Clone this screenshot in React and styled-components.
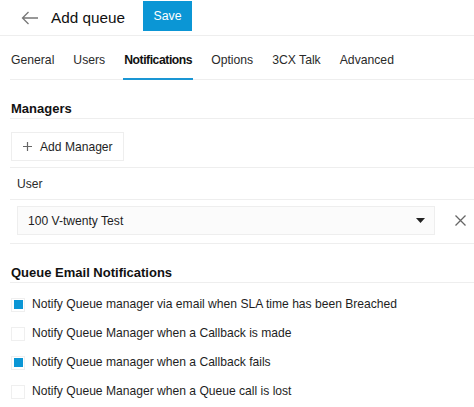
import React from 'react';
import styled, { createGlobalStyle } from 'styled-components';

const GlobalStyle = createGlobalStyle`
  body {
    margin: 0;
    background: #ffffff;
    font-family: "Liberation Sans", Arial, sans-serif;
    color: #222222;
  }
`;

const tabs = ['General', 'Users', 'Notifications', 'Options', '3CX Talk', 'Advanced'];

const notifications = [
  { label: 'Notify Queue manager via email when SLA time has been Breached', checked: true },
  { label: 'Notify Queue Manager when a Callback is made', checked: false },
  { label: 'Notify Queue manager when a Callback fails', checked: true },
  { label: 'Notify Queue Manager when a Queue call is lost', checked: false },
];

const App = () => {
  return (
    <Page>
      <GlobalStyle />
      <Header>
        <BackButton>
          <svg width="18" height="14" viewBox="0 0 18 14" fill="none" stroke="#777" strokeWidth="1.3">
            <path d="M17 7H1.5M7.5 1L1.5 7l6 6" />
          </svg>
        </BackButton>
        <Title>Add queue</Title>
        <SaveButton>Save</SaveButton>
      </Header>

      <Tabs>
        {tabs.map((tab) => (
          <Tab key={tab} active={tab === 'Notifications'}>{tab}</Tab>
        ))}
      </Tabs>

      <SectionTitle>Managers</SectionTitle>
      <ButtonRow>
        <AddButton>
          <svg width="9" height="9" viewBox="0 0 9 9" stroke="#666" strokeWidth="1.2">
            <path d="M4.5 0v9M0 4.5h9" />
          </svg>
          Add Manager
        </AddButton>
      </ButtonRow>
      <TableHead>User</TableHead>
      <TableRow>
        <Select>
          <span>100 V-twenty Test</span>
          <svg width="9" height="5" viewBox="0 0 9 5">
            <path d="M0 0h9L4.5 5z" fill="#222" />
          </svg>
        </Select>
        <RemoveButton>
          <svg width="11" height="11" viewBox="0 0 11 11" stroke="#666" strokeWidth="1.3">
            <path d="M0.5 0.5l10 10M10.5 0.5l-10 10" />
          </svg>
        </RemoveButton>
      </TableRow>

      <SectionTitle>Queue Email Notifications</SectionTitle>
      <CheckList>
        {notifications.map((item) => (
          <CheckRow key={item.label}>
            <Checkbox checked={item.checked} />
            <span>{item.label}</span>
          </CheckRow>
        ))}
      </CheckList>
    </Page>
  );
};

export default App;

const Page = styled.div`
  width: 474px;
  padding-left: 10px;
  box-sizing: border-box;
`;

const Header = styled.div`
  display: flex;
  align-items: center;
  height: 35px;
  margin-left: -10px;
  padding-left: 21px;
  border-bottom: 1px solid #eeeeee;
`;

const BackButton = styled.div`
  display: flex;
  align-items: center;
  width: 30px;
`;

const Title = styled.div`
  font-size: 15.3px;
  color: #111111;
  margin-right: 18px;
`;

const SaveButton = styled.div`
  height: 30px;
  margin-top: -3px;
  padding: 0 10.5px;
  display: flex;
  align-items: center;
  background: #0b96d5;
  color: #ffffff;
  font-size: 12.3px;
`;

const Tabs = styled.div`
  display: flex;
  height: 43px;
  align-items: stretch;
  gap: 17px;
  border-bottom: 1px solid #eeeeee;
`;

const Tab = styled.div`
  display: flex;
  align-items: center;
  padding: 6px 1px 0;
  font-size: 12.2px;
  font-weight: ${(p) => (p.active ? 700 : 400)};
  letter-spacing: ${(p) => (p.active ? '-0.45px' : '0')};
  color: ${(p) => (p.active ? '#111111' : '#2a2a2a')};
  border-bottom: 2px solid ${(p) => (p.active ? '#1a96d4' : 'transparent')};
  margin-bottom: -1px;
`;

const SectionTitle = styled.div`
  font-size: 13px;
  line-height: 15px;
  font-weight: 700;
  color: #111111;
  padding: 21px 1px 2px;
  border-bottom: 1px solid #eeeeee;
`;

const ButtonRow = styled.div`
  padding: 13px 1px 6px;
  border-bottom: 1px solid #eeeeee;
`;

const AddButton = styled.div`
  display: inline-flex;
  align-items: center;
  gap: 8px;
  height: 29px;
  padding: 0 10px 0 11px;
  border: 1px solid #eeeeee;
  box-sizing: border-box;
  font-size: 12.1px;
  color: #1e1e1e;
`;

const TableHead = styled.div`
  height: 31px;
  display: flex;
  align-items: center;
  padding-left: 7px;
  font-size: 12.1px;
  color: #2a2a2a;
  border-bottom: 1px solid #eeeeee;
`;

const TableRow = styled.div`
  display: flex;
  align-items: center;
  padding: 6px 0 8px 7px;
  border-bottom: 1px solid #eeeeee;
`;

const Select = styled.div`
  width: 418px;
  height: 29px;
  box-sizing: border-box;
  display: flex;
  align-items: center;
  justify-content: space-between;
  padding: 0 9px 0 10px;
  border: 1px solid #eeeeee;
  background: #fbfbfb;
  font-size: 12.1px;
  color: #1e1e1e;
`;

const RemoveButton = styled.div`
  display: flex;
  align-items: center;
  margin-left: 20px;
`;

const CheckList = styled.div`
  display: flex;
  flex-direction: column;
  gap: 14px;
  padding: 14px 1px 0;
`;

const CheckRow = styled.div`
  display: flex;
  align-items: center;
  gap: 7px;
  font-size: 12.1px;
  color: #1e1e1e;
  line-height: 15px;
`;

const Checkbox = styled.div`
  width: 14px;
  height: 14px;
  box-sizing: border-box;
  border: 1px solid #efefef;
  background: #ffffff;
  position: relative;
  &::after {
    content: '';
    display: ${(p) => (p.checked ? 'block' : 'none')};
    position: absolute;
    left: 1.5px;
    top: 1.5px;
    width: 9px;
    height: 9px;
    background: #0b96d5;
  }
`;
